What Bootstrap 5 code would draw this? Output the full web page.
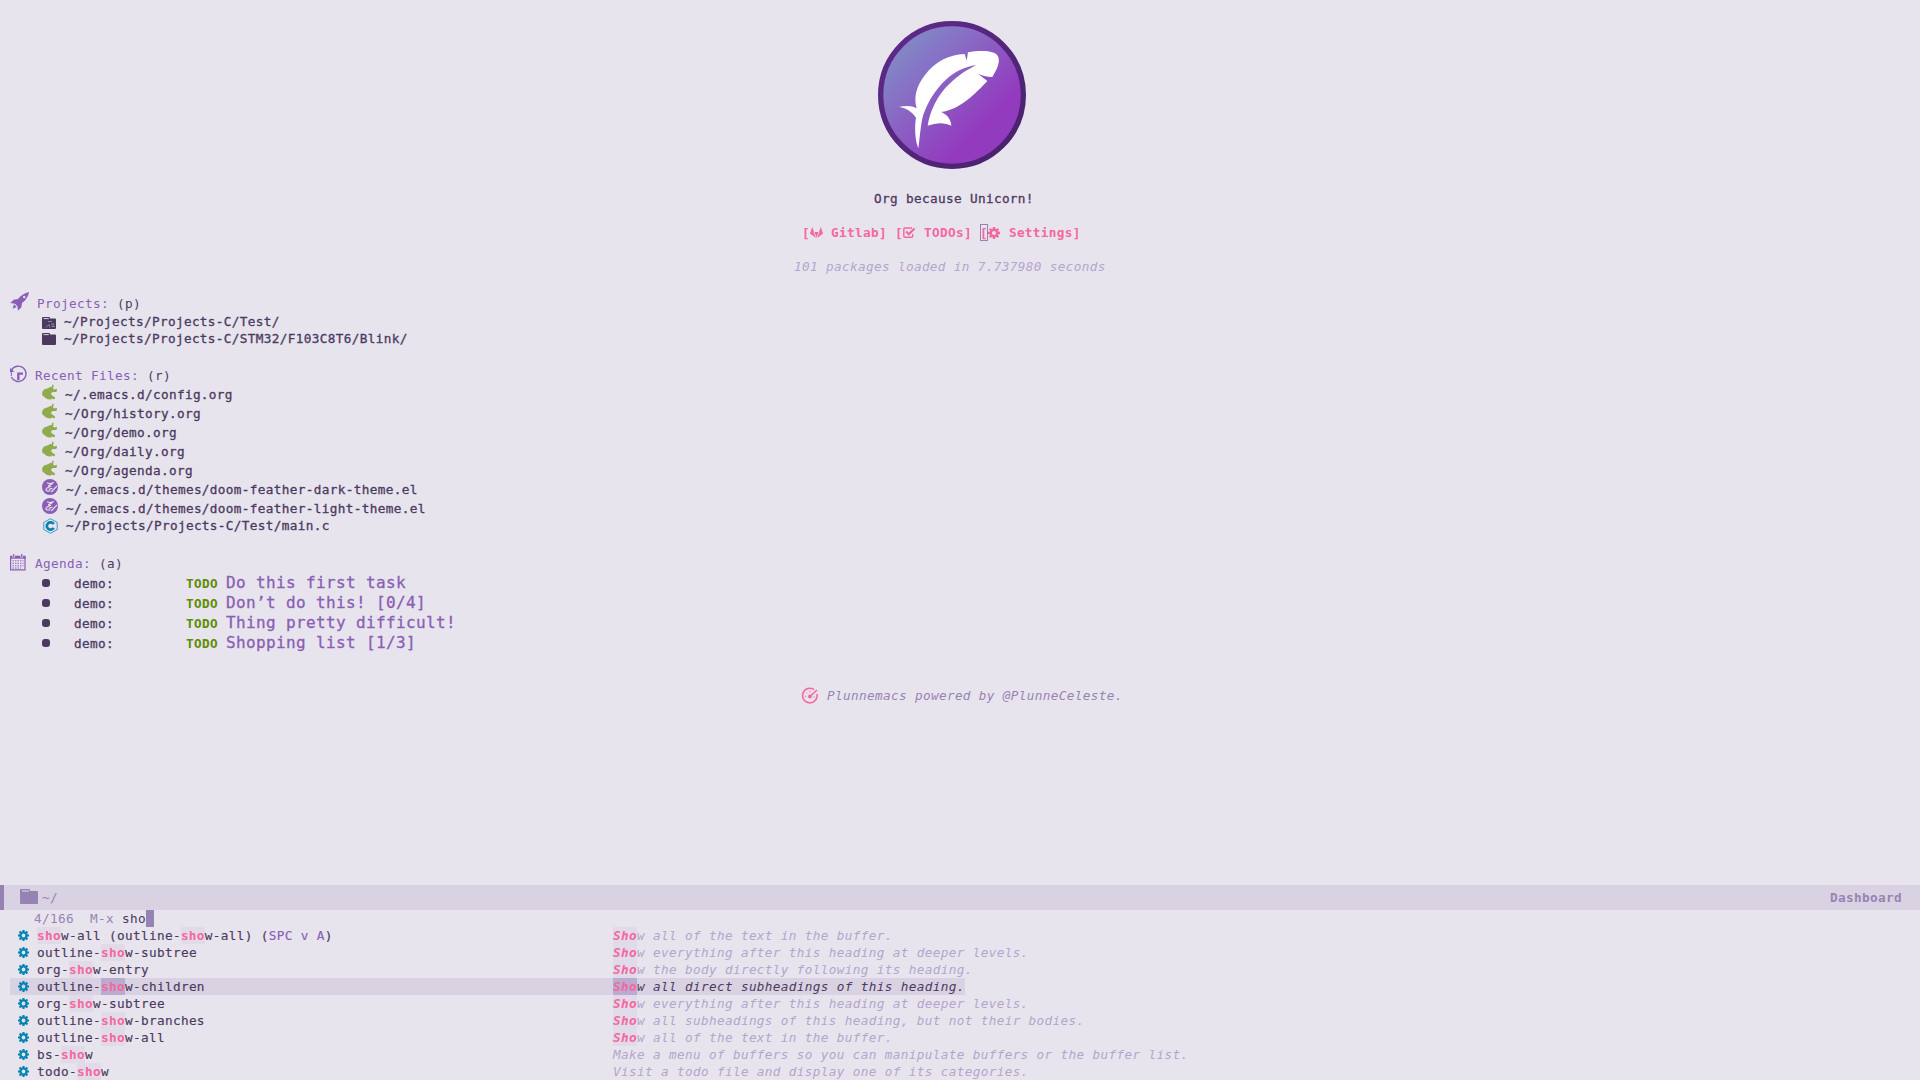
<!DOCTYPE html>
<html lang="en">
<head>
<meta charset="utf-8">
<title>Dashboard</title>
<link href="https://cdn.jsdelivr.net/npm/bootstrap@5.3.0/dist/css/bootstrap.min.css" rel="stylesheet">
<style>
:root{--fg:#4b3960;--violet:#8a5eb4;--pink:#f5679f;--mute:#9783b3;--faint:#b5a5cc;--bar:#d9d2e2;--blue:#0683b5;--olive:#8fab4b}
html,body{height:1080px;overflow:hidden}
body{background:#e7e4ee;color:var(--fg);font:12.7px/17px "DejaVu Sans Mono","Liberation Mono",monospace;letter-spacing:.354px}
svg{display:block;flex:none;overflow:visible}
.ln{display:flex;height:17px;white-space:pre;align-items:flex-start}
.tall{height:19px;padding-top:2px}
.tall>svg{margin-top:-2px}
.strong-ish{-webkit-text-stroke:.3px currentColor}
.logo{margin:21px 0 0 878px}
.title{margin:21px 0 0 874px}
.links{margin:17px 0 0 802px;color:var(--pink);font-weight:700}
.links svg{margin-top:3px}
.packs{margin:17px 0 0 794px;color:var(--faint);font-style:italic}
.head{padding-left:10px}
.head>span:first-of-type{color:var(--violet)}
.projects{margin-top:20px}
.entry{padding-left:42px}
.entry>span{flex:none}
.entry>svg+span{margin-left:8px}
.task{height:20px;display:flex;align-items:baseline;white-space:pre;padding-left:42px}
.dot-mark{width:8px;height:8px;border-radius:3px;background:var(--fg);align-self:flex-start;margin:7px 24px 0 0}
.who{width:112px}
.todo{width:40px;color:#5f8b00;font-weight:700}
.what{font-size:16px;letter-spacing:.367px;line-height:22px;color:var(--violet)}
.powered{margin:35px 0 0 802px;color:var(--mute);font-style:italic}
.modeline{height:25px;background:var(--bar);border-left:4px solid var(--mute);color:var(--mute);padding:4px 18px 0 16px;white-space:pre}
.prompt{padding-left:34px;color:var(--mute)}
.prompt b{font-weight:400;color:var(--fg)}
.caret{width:8px;height:17px;background:var(--mute)}
.cand{margin-left:10px;padding-left:8px}
.cand svg{margin:3px 8px 0 0;color:var(--blue)}
.cand .cmd{width:576px;color:var(--fg);-webkit-text-stroke:.15px currentColor}
.cand .doc{color:var(--faint);font-style:italic}
.cand i{font-weight:700;color:var(--pink);font-style:inherit;background:#e1dbe9;display:inline-block;height:17px;vertical-align:top;-webkit-text-stroke:0}
.cand.sel{background:var(--bar);width:955px}
.cand.sel .doc{color:var(--fg)}
.cand.sel i{background:#b9acce}
.key{color:var(--violet)}
.point{outline:1px solid var(--mute);outline-offset:-1px}
</style>
<script src="https://cdn.jsdelivr.net/npm/bootstrap@5.3.0/dist/js/bootstrap.bundle.min.js"></script>
</head>
<body class="d-flex flex-column">
<svg width="0" height="0" style="position:absolute">
<defs>
<linearGradient id="disc" x1=".15" y1=".15" x2=".85" y2=".85"><stop offset=".05" stop-color="#8383c6"/><stop offset=".8" stop-color="#933bbf"/></linearGradient>
<linearGradient id="rim" x1="0" y1="0" x2="1" y2="1"><stop stop-color="#5f2b8b"/><stop offset="1" stop-color="#49216b"/></linearGradient>
</defs>
<symbol id="gear" viewBox="0 0 12 12"><circle cx="6" cy="6" r="3.3" fill="none" stroke="currentColor" stroke-width="2.5"/><path d="M6 0v2.5M6 9.500v2.500M0 6h2.500M9.500 6H12M1.700 1.700l1.800 1.800M8.500 8.500l1.800 1.800M1.700 10.300l1.800-1.800M8.500 3.500l1.800-1.800" stroke="currentColor" stroke-width="2.300"/></symbol>
<symbol id="unicorn" viewBox="0 0 46 48"><path d="M0 27C2 18 8 14 16 13C21 12 25 9 27 8L29 10L33 0L36 3L34 13L38 16L45 14L46 20L43 24L36 24C30 25 27 27 28 31L33 36L39 39L40 45L36 47L31 43L28 47C17 48 9 43 6 38L2 36Z" fill="currentColor"/></symbol>
<symbol id="lisp" viewBox="0 0 16 16"><circle cx="8" cy="8" r="8" fill="currentColor"/><path d="M5 3.800Q8 5.200 11 3.800Q10 5.600 7 6.200Q5.500 7.200 9 7.300Q4.200 8.800 3.800 10.800Q4.500 12.800 8.500 11.800M6.800 10.400L10.500 9.300M9.300 13L15 7" fill="none" stroke="#e7e4ee" stroke-width="1.100"/></symbol>
<symbol id="folder" viewBox="0 0 14 12"><path d="M0 1Q0 0 1 0H7Q8 0 8 1V1.600H13Q14 1.600 14 2.600V11Q14 12 13 12H1Q0 12 0 11Z" fill="currentColor"/><path d="M1.500 1.600H6.800" stroke="#e7e4ee" stroke-width=".9"/></symbol>
</svg>

<header>
<svg class="logo" width="148" height="148" viewBox="54 33 444 444"><circle cx="276" cy="255" r="214" fill="url(#disc)" stroke="url(#rim)" stroke-width="16"/><path fill="#fff" d="M117 291C135 286 155 286 170 295C161 262 168 230 195 195C225 155 265 134 314 132L320 152L324 127C350 123 385 120 405 130C423 141 420 165 397 201C380 200 365 197 354 191L382 213C350 247 300 300 243 306C258 312 273 325 274 347C255 337 230 337 203 347C209 305 232 255 268 222C298 192 325 178 348 165C318 170 288 182 260 207C223 240 195 290 186 330C180 365 178 395 175 415C165 390 163 350 168 323C155 305 140 294 117 291Z"/></svg>
<div class="ln title strong-ish">Org because Unicorn!</div>
<div class="ln links">[<svg width="13" height="12" viewBox="0 0 13 12" fill="currentColor"><path d="M2.200 0L4.200 5.500L6.500 11.500L0 6.500ZM10.800 0L8.800 5.500L6.500 11.500L13 6.500Z"/><path d="M4.300 5H8.700L6.500 11Z"/><path d="M3.900 5L6.500 11.500L9.100 5" fill="none" stroke="#e7e4ee" stroke-width=".7"/></svg> Gitlab] [<svg width="13" height="11" viewBox="0 0 13 11" fill="none" stroke="currentColor"><path d="M9 1H2Q.8 1 .8 2.200V9Q.8 10.200 2 10.200H8.500Q9.700 10.200 9.700 9V7" stroke-width="1.400"/><path d="M3 4.500L5.800 7.200L11.500 1.500" stroke-width="2.200"/></svg> TODOs] <span class="point">[</span><svg width="12" height="12" style="margin-right:1px"><use href="#gear"/></svg> Settings]</div>
<div class="ln packs">101 packages loaded in 7.737980 seconds</div>
</header>

<main>
<section class="projects">
<div class="ln head"><svg width="19" height="19" viewBox="0 0 57 57" style="margin-top:-3px" fill="#8a5eb4"><path d="M57 0C55 14 48 24 36 33L34 46L24 56L22 42L15 35L1 33L11 23L24 21C34 9 44 3 57 0ZM43 11A4 4 0 1 0 47 15ZM12 37L20 45L8 50Z"/></svg><span style="margin-left:8px">Projects:</span> (p)</div>
<div class="ln entry strong-ish" style="margin-top:1px"><svg width="14" height="12" style="margin-top:4px"><use href="#folder"/><path d="M6 4.500h4M4 10.500l3-3 1 3M9 7h3l-2 2.500h3" stroke="#aaa0b8" fill="none" stroke-width=".7"/></svg><span>~/Projects/Projects-C/Test/</span></div>
<div class="ln entry strong-ish"><svg width="14" height="12" style="margin-top:3px"><use href="#folder"/></svg><span>~/Projects/Projects-C/STM32/F103C8T6/Blink/</span></div>
</section>

<section class="projects">
<div class="ln head"><svg width="17" height="17" viewBox="0 0 51 51" style="margin-top:-1px" fill="none" stroke="#8a5eb4" stroke-width="4"><path d="M5 12A23 23 0 1 1 4 33"/><path d="M0 5V18H13Z" fill="#8a5eb4" stroke="none"/><path d="M4 18V30" stroke-width="3"/><path d="M25 42V23H39" stroke-width="7"/></svg><span style="margin-left:8px">Recent Files:</span> (r)</div>
<div class="ln tall entry strong-ish"><svg width="15" height="16" color="#8fab4b"><use href="#unicorn"/></svg><span>~/.emacs.d/config.org</span></div>
<div class="ln tall entry strong-ish"><svg width="15" height="16" color="#8fab4b"><use href="#unicorn"/></svg><span>~/Org/history.org</span></div>
<div class="ln tall entry strong-ish"><svg width="15" height="16" color="#8fab4b"><use href="#unicorn"/></svg><span>~/Org/demo.org</span></div>
<div class="ln tall entry strong-ish"><svg width="15" height="16" color="#8fab4b"><use href="#unicorn"/></svg><span>~/Org/daily.org</span></div>
<div class="ln tall entry strong-ish"><svg width="15" height="16" color="#8fab4b"><use href="#unicorn"/></svg><span>~/Org/agenda.org</span></div>
<div class="ln tall entry strong-ish"><svg width="16" height="16" color="#8a5eb4"><use href="#lisp"/></svg><span>~/.emacs.d/themes/doom-feather-dark-theme.el</span></div>
<div class="ln tall entry strong-ish"><svg width="16" height="16" color="#8a5eb4"><use href="#lisp"/></svg><span>~/.emacs.d/themes/doom-feather-light-theme.el</span></div>
<div class="ln entry strong-ish"><svg width="16" height="16" viewBox="0 0 16 16" style="margin-top:1px" fill="none" stroke="#0683b5"><path d="M8.500 .7L15.200 4.400V11.600L8.500 15.300L1.800 11.600V4.400Z" stroke-width="1" opacity=".75"/><path d="M11.700 6.100A3.700 3.700 0 1 0 11.700 9.900" stroke-width="2.700"/></svg><span>~/Projects/Projects-C/Test/main.c</span></div>
</section>

<section style="margin-top:21px">
<div class="ln head"><svg width="16" height="17" viewBox="0 0 16 17" style="margin-top:-1px" fill="none" stroke="#8a5eb4"><path d="M.6 3V15.800H15V3" stroke-width="1.200"/><path d="M0 3.200H15.600" stroke-width="3"/><path d="M3.700 0V3.500M11.700 0V3.500" stroke="#e7e4ee" stroke-width="2.600"/><path d="M3.700 0V3.200M11.700 0V3.200" stroke-width="1.200"/><path d="M2.500 6.800H13.500M2.500 9.300H13.500M2.500 11.800H13.500M2.500 14H11" stroke-width="1" stroke-dasharray="1.500 1"/></svg><span style="margin-left:9px">Agenda:</span> (a)</div>
<div class="task"><span class="dot-mark"></span><span class="who strong-ish">demo:</span><span class="todo">TODO</span><span class="what strong-ish">Do this first task</span></div>
<div class="task"><span class="dot-mark"></span><span class="who strong-ish">demo:</span><span class="todo">TODO</span><span class="what strong-ish">Don’t do this! [0/4]</span></div>
<div class="task"><span class="dot-mark"></span><span class="who strong-ish">demo:</span><span class="todo">TODO</span><span class="what strong-ish">Thing pretty difficult!</span></div>
<div class="task"><span class="dot-mark"></span><span class="who strong-ish">demo:</span><span class="todo">TODO</span><span class="what strong-ish">Shopping list [1/3]</span></div>
</section>
<div class="ln powered"><svg width="16" height="16" viewBox="0 0 16 16" style="margin:1px 9px 0 0" fill="none" stroke="#f5679f"><path d="M12.200 1.700A7.300 7.300 0 1 0 15 6" stroke-width="1.500"/><path d="M7 9.300L15 2" stroke-width="1.500"/><circle cx="8" cy="8.500" r="1.200" stroke-width="1.500"/><path d="M3 8.300h1.200M4.500 4.500l.8.800M8 3v1.200M11.500 9h1.200" stroke-width="1"/></svg>Plunnemacs powered by @PlunneCeleste.</div>
</main>

<footer class="mt-auto">
<div class="modeline d-flex justify-content-between"><div class="d-flex"><svg width="18" height="15" viewBox="0 0 18 15" style="margin-right:4px"><path d="M0 1Q0 0 1 0H9Q10 0 10 1V2H17Q18 2 18 3V14Q18 15 17 15H1Q0 15 0 14Z" fill="#9783b3"/><path d="M2 2H9" stroke="#c9bfd7" stroke-width="1.500"/></svg>~/</div><strong>Dashboard</strong></div>
<div class="ln prompt">4/166  M-x <b>sho</b><span class="caret"></span></div>
<div class="ln cand"><svg width="11" height="11"><use href="#gear"/></svg><span class="cmd"><i>sho</i>w-all (outline-<i>sho</i>w-all) (<span class="key">SPC v A</span>)</span><span class="doc"><i>Sho</i>w all of the text in the buffer.</span></div>
<div class="ln cand"><svg width="11" height="11"><use href="#gear"/></svg><span class="cmd">outline-<i>sho</i>w-subtree</span><span class="doc"><i>Sho</i>w everything after this heading at deeper levels.</span></div>
<div class="ln cand"><svg width="11" height="11"><use href="#gear"/></svg><span class="cmd">org-<i>sho</i>w-entry</span><span class="doc"><i>Sho</i>w the body directly following its heading.</span></div>
<div class="ln cand sel"><svg width="11" height="11"><use href="#gear"/></svg><span class="cmd">outline-<i>sho</i>w-children</span><span class="doc"><i>Sho</i>w all direct subheadings of this heading.</span></div>
<div class="ln cand"><svg width="11" height="11"><use href="#gear"/></svg><span class="cmd">org-<i>sho</i>w-subtree</span><span class="doc"><i>Sho</i>w everything after this heading at deeper levels.</span></div>
<div class="ln cand"><svg width="11" height="11"><use href="#gear"/></svg><span class="cmd">outline-<i>sho</i>w-branches</span><span class="doc"><i>Sho</i>w all subheadings of this heading, but not their bodies.</span></div>
<div class="ln cand"><svg width="11" height="11"><use href="#gear"/></svg><span class="cmd">outline-<i>sho</i>w-all</span><span class="doc"><i>Sho</i>w all of the text in the buffer.</span></div>
<div class="ln cand"><svg width="11" height="11"><use href="#gear"/></svg><span class="cmd">bs-<i>sho</i>w</span><span class="doc">Make a menu of buffers so you can manipulate buffers or the buffer list.</span></div>
<div class="ln cand"><svg width="11" height="11"><use href="#gear"/></svg><span class="cmd">todo-<i>sho</i>w</span><span class="doc">Visit a todo file and display one of its categories.</span></div>
</footer>
</body>
</html>
